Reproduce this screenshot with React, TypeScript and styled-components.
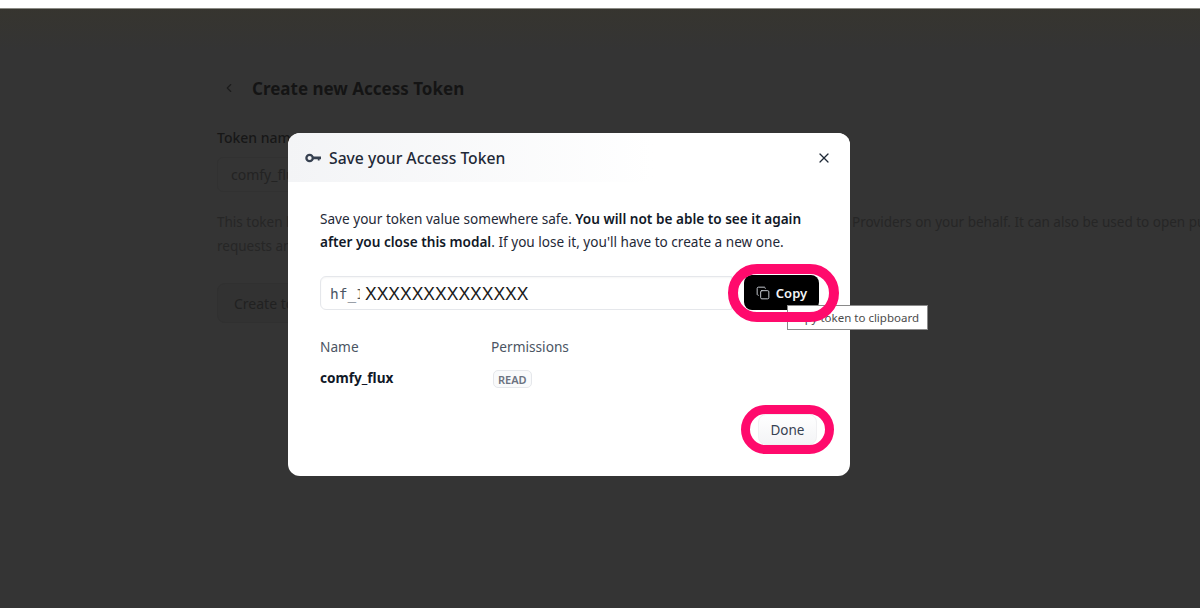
import styled, { createGlobalStyle } from "styled-components"
import { ChevronLeft, Copy, X } from "lucide-react"

const GlobalStyle = createGlobalStyle`
html, body {
  margin: 0;
  padding: 0;
  background: #343434;
  overflow: hidden;
}
* {
  box-sizing: border-box;
}
`

const App = () => {
  return (
    <>
      <GlobalStyle />
      <Page>
        <TopStrip />
        <Content>
          <TitleRow>
            <ChevronLeft size={14} color="#1c1c1c" />
            <h1>Create new Access Token</h1>
          </TitleRow>
          <FieldLabel>Token name</FieldLabel>
          <FieldBox>comfy_flux</FieldBox>
          <Hint>
            This token has read-only access to all your public gated repositories and can make calls to Inference
            Providers on your behalf. It can also be used to open pull requests and comment on discussions.
            <br />
            requests and comment on discussions.
          </Hint>
          <CreateButton>Create token</CreateButton>
        </Content>
      </Page>

      <Modal>
        <ModalHeader>
          <Title>
            <KeyIcon />
            Save your Access Token
          </Title>
          <CloseIcon>
            <X size={16} color="#1f2937" strokeWidth={1.8} />
          </CloseIcon>
        </ModalHeader>
        <ModalBody>
          <Intro>
            Save your token value somewhere safe. <b>You will not be able to see it again after you close this modal</b>
            . If you lose it, you'll have to create a new one.
          </Intro>
          <TokenRow>
            <TokenField>
              <span>hf_I</span>
              <em>XXXXXXXXXXXXXX</em>
            </TokenField>
            <CopyButton>
              <Copy size={14} color="#d1d5db" strokeWidth={1.6} />
              Copy
              <Tooltip>Copy token to clipboard</Tooltip>
              <Ring />
            </CopyButton>
          </TokenRow>
          <InfoGrid>
            <InfoLabel>Name</InfoLabel>
            <InfoLabel>Permissions</InfoLabel>
            <TokenName>comfy_flux</TokenName>
            <div>
              <Badge>READ</Badge>
            </div>
          </InfoGrid>
          <Footer>
            <DoneButton>
              Done
              <DoneRing />
            </DoneButton>
          </Footer>
        </ModalBody>
      </Modal>
    </>
  )
}

export default App

const KeyIcon = () => (
  <svg width="16" height="10" viewBox="0 0 16 10" fill="none" style={{ flexShrink: 0 }}>
    <circle cx="4.6" cy="5" r="3.2" stroke="#374151" strokeWidth="2.3" />
    <path d="M7.5 3.6H16v2.6h-1.4v1.4h-1.8V6.2H7.5z" fill="#374151" />
  </svg>
)

const Page = styled.div`
width: 1200px;
height: 608px;
background: linear-gradient(to bottom, #37352e, #343434 50px);
font-family: "Noto Sans", sans-serif;
overflow: hidden;
`

const TopStrip = styled.div`
height: 9px;
background-color: #fff;
border-bottom: 1px solid #8a8a84;
`

const Content = styled.div`
padding: 67px 0 0 217px;
display: flex;
flex-direction: column;
align-items: flex-start;
`

const TitleRow = styled.div`
display: flex;
align-items: center;
gap: 16px;
margin-left: 5px;
height: 24px;

h1 {
  margin: 0;
  font-size: 17px;
  font-weight: 700;
  color: #141414;
  white-space: nowrap;
}
`

const FieldLabel = styled.div`
margin-top: 28px;
font-size: 14px;
font-weight: 500;
line-height: 20px;
color: #171717;
`

const FieldBox = styled.div`
margin-top: 9px;
width: 300px;
height: 35px;
padding-left: 13px;
display: flex;
align-items: center;
font-size: 14px;
color: #232323;
border: 1px solid #313131;
border-radius: 6px;
`

const Hint = styled.div`
margin-top: 18px;
width: 1100px;
font-size: 13.5px;
line-height: 24px;
color: #262626;
white-space: nowrap;
`

const CreateButton = styled.div`
margin-top: 25px;
height: 40px;
width: 120px;
padding-left: 16px;
display: flex;
align-items: center;
font-size: 14px;
color: #212121;
background-color: #323232;
border: 1px solid #303030;
border-radius: 8px;
white-space: nowrap;
`

const Modal = styled.div`
position: absolute;
left: 288px;
top: 133px;
width: 562px;
height: 343px;
background-color: #fff;
border-radius: 12px;
font-family: "Noto Sans", sans-serif;
`

const ModalHeader = styled.div`
height: 49px;
padding: 0 18px 0 17px;
display: flex;
align-items: center;
justify-content: space-between;
border-radius: 12px 12px 0 0;
background: linear-gradient(to right, #f3f4f6, #fff 65%);
`

const Title = styled.div`
display: flex;
align-items: center;
gap: 8px;
font-size: 15.7px;
font-weight: 500;
color: #1f2937;
white-space: nowrap;
`

const CloseIcon = styled.div`
display: flex;
align-items: center;
`

const ModalBody = styled.div`
padding: 25px 32px 0;
`

const Intro = styled.p`
margin: 0;
width: 495px;
font-size: 13.6px;
line-height: 23px;
color: #1f2937;

b {
  font-weight: 600;
  color: #111827;
}
`

const TokenRow = styled.div`
margin-top: 22px;
display: flex;
align-items: center;
width: 499px;
position: relative;
`

const TokenField = styled.div`
width: 412px;
height: 34px;
padding: 3px 0 0 9px;
display: flex;
align-items: center;
background-color: #fff;
border: 1px solid #e5e7eb;
border-radius: 6px 0 0 6px;
box-shadow: inset 0 1px 2px rgba(0, 0, 0, 0.04);

span {
  width: 30px;
  margin-right: 5px;
  overflow: hidden;
  font-family: "DejaVu Sans Mono", monospace;
  font-size: 14.5px;
  line-height: 24px;
  color: #4b5563;
  white-space: nowrap;
}

em {
  font-family: "Liberation Sans", sans-serif;
  font-style: normal;
  font-size: 17.5px;
  line-height: 24px;
  color: #1a1a1a;
  white-space: nowrap;
}
`

const CopyButton = styled.div`
position: relative;
width: 75px;
height: 35px;
padding-top: 1px;
display: flex;
align-items: center;
justify-content: center;
gap: 6px;
margin-left: 12px;
background-color: #000;
border-radius: 8px;
font-size: 13px;
font-weight: 600;
color: #f3f4f6;
`

const Ring = styled.div`
position: absolute;
inset: -11px -20px -12px -16px;
border: 10px solid #ff0a6c;
border-radius: 30px;
`

const Tooltip = styled.div`
position: absolute;
left: 43px;
top: 30px;
width: 141px;
height: 25px;
padding-right: 8px;
display: flex;
align-items: center;
justify-content: flex-end;
background-color: #fff;
border: 1px solid #8a8a8a;
font-size: 11.5px;
font-weight: 400;
color: #4b4b4b;
white-space: nowrap;
overflow: hidden;
`

const InfoGrid = styled.div`
margin-top: 26px;
display: grid;
grid-template-columns: 171px 1fr;
row-gap: 9px;
align-items: center;
`

const InfoLabel = styled.div`
font-size: 13.7px;
line-height: 22px;
color: #4b5563;
`

const TokenName = styled.div`
font-size: 13.6px;
font-weight: 700;
line-height: 22px;
color: #111827;
`

const Badge = styled.span`
display: inline-block;
margin-left: 2px;
padding: 0 4px;
height: 18px;
line-height: 17px;
font-size: 11px;
font-weight: 600;
color: #6b7280;
background-color: #f9fafb;
border: 1px solid #e5e7eb;
border-radius: 5px;
`

const Footer = styled.div`
margin-top: 25px;
display: flex;
justify-content: flex-end;
padding-right: 1px;
`

const DoneButton = styled.div`
position: relative;
width: 59px;
height: 31px;
display: flex;
align-items: center;
justify-content: center;
font-size: 13.5px;
color: #374151;
background: linear-gradient(to bottom, #fff, #f3f4f6);
border: 1px solid #f0f0f2;
border-radius: 8px;
`

const DoneRing = styled.div`
position: absolute;
inset: -10px -18px;
border: 9px solid #ff0a6c;
border-radius: 26px;
`
